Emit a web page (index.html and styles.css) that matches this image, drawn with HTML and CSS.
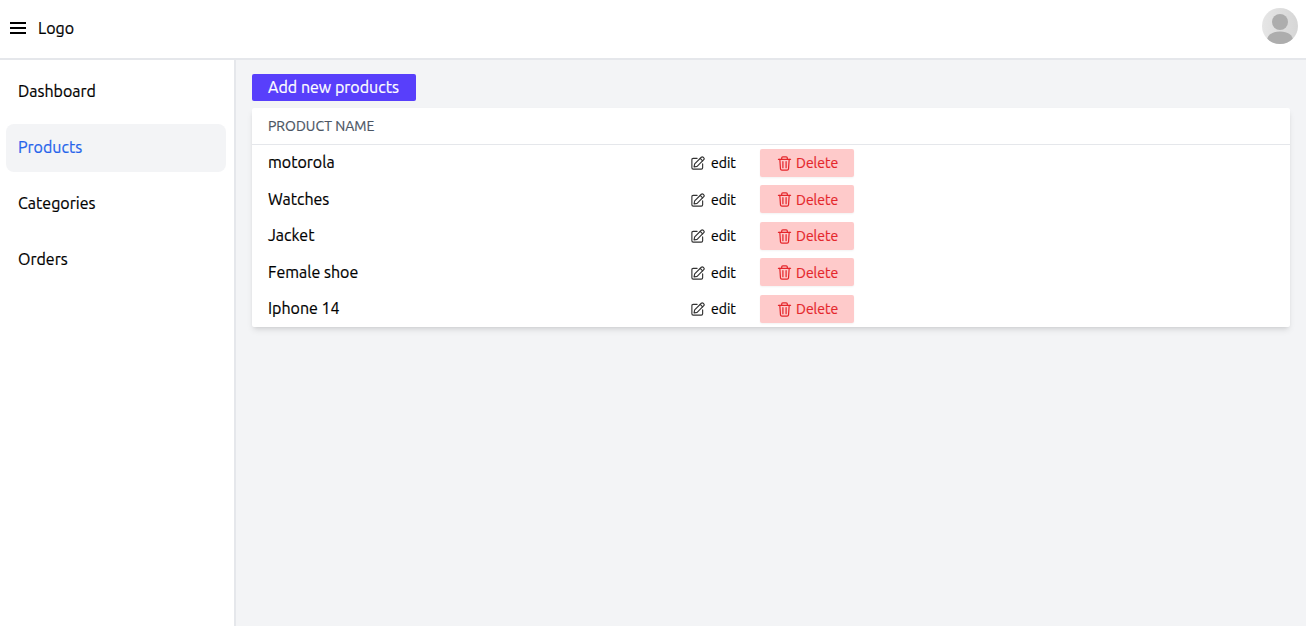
FILE: index.html
```html
<!DOCTYPE html>
<html lang="en">
<head>
<meta charset="utf-8">
<title>Products</title>
<link rel="stylesheet" href="styles.css">
</head>
<body>
<svg class="sprite" width="0" height="0" aria-hidden="true">
  <symbol id="pencil" viewBox="0 0 16 16">
    <path d="M11.800 1.400a1.500 1.500 0 0 1 2.100 0l.7.7a1.500 1.500 0 0 1 0 2.100L7 11.800l-3.500.7.700-3.500z"/>
    <path d="M10.500 2.700l2.800 2.800"/>
    <path d="M7 2.700H2.500A1.500 1.500 0 0 0 1 4.200v9.300A1.500 1.500 0 0 0 2.500 15h9.300a1.500 1.500 0 0 0 1.500-1.500V9"/>
  </symbol>
  <symbol id="trash" viewBox="0 0 16 16">
    <path d="M1.500 3.500h13"/>
    <path d="M5 3.500V2.200A1.200 1.200 0 0 1 6.200 1h3.600A1.200 1.200 0 0 1 11 2.200v1.300"/>
    <path d="M3 3.500l.7 10.200A1.500 1.500 0 0 0 5.200 15h5.600a1.500 1.500 0 0 0 1.500-1.300L13 3.500"/>
    <path d="M6.300 6v6.500M9.700 6v6.500"/>
  </symbol>
</svg>
<header class="topbar">
  <div class="brand">
    <svg class="menu-icon" viewBox="0 0 16 12" width="16" height="12"><path d="M0 1h16M0 6h16M0 11h16" stroke="#000" stroke-width="2" fill="none"/></svg>
    <span>Logo</span>
  </div>
  <svg class="avatar" viewBox="0 0 36 36" width="36" height="36">
    <defs>
      <clipPath id="circle"><circle cx="18" cy="18" r="18"/></clipPath>
      <linearGradient id="avatar-bg" x1="0" y1="0" x2="1" y2="0"><stop offset="0" stop-color="#e6e6e6"/><stop offset="1" stop-color="#d6d6d6"/></linearGradient>
    </defs>
    <circle cx="18" cy="18" r="18" fill="url(#avatar-bg)"/>
    <g clip-path="url(#circle)" fill="#adadad">
      <circle cx="18" cy="14" r="8"/>
      <path d="M5 36v-3c0-6 5-9.500 13-9.500s13 3.500 13 9.500v3z"/>
    </g>
  </svg>
</header>
<div class="shell">
  <nav class="sidebar">
    <a class="nav-item">Dashboard</a>
    <a class="nav-item active">Products</a>
    <a class="nav-item">Categories</a>
    <a class="nav-item">Orders</a>
  </nav>
  <main class="content">
    <button class="add-btn">Add new products</button>
    <div class="card">
      <div class="card-head">PRODUCT NAME</div>
      <div class="rows">
        <div class="row"><span class="name">motorola</span><a class="edit"><svg class="ico"><use href="#pencil"/></svg>edit</a><button class="del"><svg class="ico"><use href="#trash"/></svg>Delete</button></div>
        <div class="row"><span class="name">Watches</span><a class="edit"><svg class="ico"><use href="#pencil"/></svg>edit</a><button class="del"><svg class="ico"><use href="#trash"/></svg>Delete</button></div>
        <div class="row"><span class="name">Jacket</span><a class="edit"><svg class="ico"><use href="#pencil"/></svg>edit</a><button class="del"><svg class="ico"><use href="#trash"/></svg>Delete</button></div>
        <div class="row"><span class="name">Female shoe</span><a class="edit"><svg class="ico"><use href="#pencil"/></svg>edit</a><button class="del"><svg class="ico"><use href="#trash"/></svg>Delete</button></div>
        <div class="row"><span class="name">Iphone 14</span><a class="edit"><svg class="ico"><use href="#pencil"/></svg>edit</a><button class="del"><svg class="ico"><use href="#trash"/></svg>Delete</button></div>
      </div>
    </div>
  </main>
</div>
</body>
</html>
```
FILE: styles.css
```css
* { box-sizing: border-box; }
html, body { margin: 0; height: 100%; }
body {
  font-family: Ubuntu, "Noto Sans", sans-serif;
  font-size: 16px;
  -webkit-text-stroke: .2px;
  color: #000;
  background: #fff;
  display: flex;
  flex-direction: column;
  overflow: hidden;
}
.sprite { position: absolute; }
.topbar {
  height: 60px;
  flex: none;
  display: flex;
  align-items: center;
  justify-content: space-between;
  padding: 0 8px 6px 10px;
  border-bottom: 2px solid #e5e7eb;
}
.brand { display: flex; align-items: center; gap: 12px; padding-top: 4px; }
.menu-icon { display: block; }
.avatar { display: block; }
.shell { flex: 1; display: flex; min-height: 0; }
.sidebar {
  width: 236px;
  flex: none;
  border-right: 2px solid #e5e7eb;
  padding: 8px 8px 8px 6px;
  display: flex;
  flex-direction: column;
  gap: 8px;
}
.nav-item {
  height: 48px;
  display: flex;
  align-items: center;
  padding: 0 12px 2px;
  border-radius: 8px;
}
.nav-item.active { background: #f3f4f6; color: #2563eb; }
.content {
  flex: 1;
  background: #f3f4f6;
  padding: 14px 16px;
}
.add-btn {
  display: block;
  height: 27px;
  width: 164px;
  padding: 0 1px 2px 0;
  border: 0;
  border-radius: 2px;
  background: #583ffb;
  color: #fff;
  font: inherit;
}
.card {
  margin-top: 7px;
  background: #fff;
  border-radius: 2px;
  box-shadow: 0 4px 6px -1px rgba(0,0,0,.1), 0 2px 4px -2px rgba(0,0,0,.1);
}
.card-head {
  height: 36.65px;
  display: flex;
  align-items: center;
  padding: 0 16px;
  font-size: 14px;
  color: #4b5563;
  border-bottom: 1px solid #e5e7eb;
}
.rows { display: flex; flex-direction: column; }
.row {
  height: 36.5px;
  display: flex;
  align-items: center;
  padding: 0 16px;
}
.name { width: 423px; flex: none; padding-bottom: 1px; }
.edit {
  width: 69px;
  flex: none;
  display: flex;
  align-items: center;
  gap: 6px;
  padding-top: .5px;
  font-size: 14px;
}
.ico {
  width: 14px;
  height: 14px;
  fill: none;
  stroke: currentColor;
  stroke-width: 1.300;
  stroke-linecap: round;
  stroke-linejoin: round;
  flex: none;
}
.edit .ico { color: #333; }
.del {
  width: 94px;
  height: 28px;
  padding: .5px 0 0 17px;
  border: 0;
  border-radius: 2px;
  background: #fecaca;
  color: #e5262b;
  font: inherit;
  font-size: 14px;
  display: flex;
  align-items: center;
  gap: 4px;
  box-shadow: 0 1px 2px rgba(0,0,0,.05);
}
.del .ico { width: 15px; height: 15px; }
```
